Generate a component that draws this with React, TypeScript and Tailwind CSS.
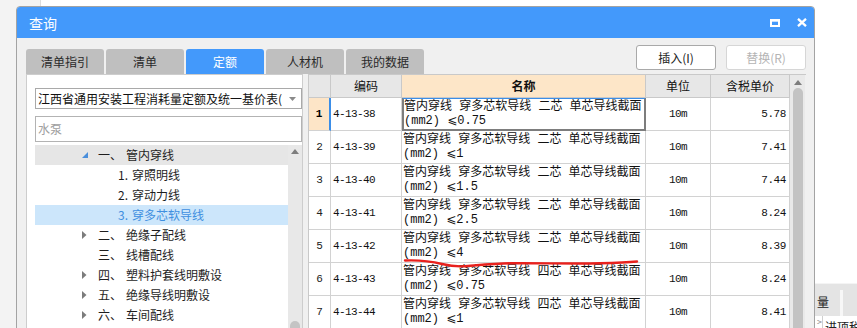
import React from "react"

const ui = "font-['Noto_Sans_CJK_SC',sans-serif]"
const mono = "font-['Liberation_Mono','Noto_Sans_CJK_SC','DejaVu_Sans',monospace]"

const tabs = ["清单指引", "清单", "定额", "人材机", "我的数据"]

type TreeItem = {
  level: 0 | 1
  arrow?: "open" | "closed"
  num: string
  text: string
  band?: boolean
  selected?: boolean
}

const tree: TreeItem[] = [
  { level: 0, arrow: "open", num: "一、", text: "管内穿线", band: true },
  { level: 1, num: "1.", text: "穿照明线" },
  { level: 1, num: "2.", text: "穿动力线" },
  { level: 1, num: "3.", text: "穿多芯软导线", selected: true },
  { level: 0, arrow: "closed", num: "二、", text: "绝缘子配线" },
  { level: 0, num: "三、", text: "线槽配线" },
  { level: 0, arrow: "closed", num: "四、", text: "塑料护套线明敷设" },
  { level: 0, arrow: "closed", num: "五、", text: "绝缘导线明敷设" },
  { level: 0, arrow: "closed", num: "六、", text: "车间配线" },
]

const rows = [
  { n: 1, code: "4-13-38", core: "二芯", sec: "0.75", price: "5.78" },
  { n: 2, code: "4-13-39", core: "二芯", sec: "1", price: "7.41" },
  { n: 3, code: "4-13-40", core: "二芯", sec: "1.5", price: "7.44" },
  { n: 4, code: "4-13-41", core: "二芯", sec: "2.5", price: "8.24" },
  { n: 5, code: "4-13-42", core: "二芯", sec: "4", price: "8.39" },
  { n: 6, code: "4-13-43", core: "四芯", sec: "0.75", price: "8.24" },
  { n: 7, code: "4-13-44", core: "四芯", sec: "1", price: "8.41" },
]

function TreeRow({ item }: { item: TreeItem }) {
  const bg = item.selected ? "bg-[#cce6fb]" : item.band ? "bg-[#e6e6e6]" : ""
  const color = item.selected ? "text-[#3f8fe0]" : "text-[#1e1e1e]"
  return (
    <div className={`flex items-center h-[20px] text-[12px] whitespace-nowrap ${bg} ${color}`}>
      {item.level === 0 ? (
        <>
          <span className="w-[47px]" />
          <span className="w-[16px] flex items-center">
            {item.arrow === "open" && (
              <svg width="6" height="6" viewBox="0 0 6 6">
                <polygon points="6,0 6,6 0,6" fill="#4a8fdc" />
              </svg>
            )}
            {item.arrow === "closed" && (
              <svg width="5" height="8" viewBox="0 0 5 8">
                <polygon points="0,0 4.5,4 0,8" fill="#7c7c7c" />
              </svg>
            )}
          </span>
          <span className="w-[28px]">{item.num}</span>
          <span>{item.text}</span>
        </>
      ) : (
        <>
          <span className="w-[83px]" />
          <span className="w-[14px]">{item.num}</span>
          <span>{item.text}</span>
        </>
      )}
    </div>
  )
}

function TableRow({ r }: { r: (typeof rows)[number] }) {
  const first = r.n === 1
  return (
    <div className="grid grid-cols-[22px_71px_244px_65px_79px] h-[33px]">
      <div
        className={`flex items-center justify-center border-r border-b border-[#d2d2d2] text-[11px] ${mono} ${
          first ? "bg-[#fde5c7] font-bold border-r-2 border-r-[#3b8ee8]" : "bg-white text-[#222]"
        }`}
      >
        {r.n}
      </div>
      <div className={`flex items-center pl-[2px] border-r border-b border-[#d2d2d2] bg-white text-[11px] tracking-[-0.6px] text-[#111] ${mono}`}>
        {r.code}
      </div>
      <div
        className={`bg-white text-[12px] leading-[14px] text-[#111] whitespace-nowrap overflow-hidden ${mono} ${
          first
            ? "border-2 border-[#7d7d7d] border-t-[#3b8ee8] border-t pl-0 pt-[1px]"
            : "border-r border-b border-[#d2d2d2] pl-[1px] pt-[2px]"
        }`}
      >
        <div>管内穿线 穿多芯软导线 {r.core} 单芯导线截面</div>
        <div>(mm2) ⩽{r.sec}</div>
      </div>
      <div className={`flex items-center justify-center pt-[1px] border-r border-b border-[#d2d2d2] bg-white text-[11px] tracking-[-0.6px] text-[#111] ${mono}`}>
        10m
      </div>
      <div className={`flex items-center justify-end pr-[3px] pt-[1px] border-r border-b border-[#d2d2d2] bg-white text-[11px] tracking-[-0.4px] text-[#111] ${mono}`}>
        {r.price}
      </div>
    </div>
  )
}

export default function App() {
  return (
    <div className={`relative w-[857px] h-[328px] overflow-hidden bg-white flex ${ui}`}>
      {/* underlying app */}
      <div className="w-[41px] h-full bg-[#f3f3f3] border-r border-[#dedede]" />
      <div className="flex-1 flex flex-col items-end">
        <div className="mt-[283px] w-[42px] h-[35px] bg-[#e4e4e4] border-t border-[#f4f4f4] flex">
          <div className="w-[25px] flex items-end pb-[5px] pl-[2px] text-[12px] text-[#222]">量</div>
          <div className="w-[3px] bg-[#f7f7f7] mt-[6px]" />
        </div>
        <div className="w-[42px] flex h-[12px] text-[12px] text-[#222] leading-[16px]">
          <div className="w-[10px] pl-[2px] text-[#888] text-[9px] leading-[12px]">&gt;</div>
          <div className="border-l border-[#cfcfcf] pl-[2px] pt-[3px] whitespace-nowrap">进项税</div>
        </div>
      </div>

      {/* dialog */}
      <div className="absolute left-[16px] top-[6px] w-[799px] h-[345px] border border-[#a3a3a3] rounded-t-[4px] overflow-hidden bg-[#f0f0f0] flex flex-col">
        <div className="h-[31px] bg-[#4399fb] flex items-center pl-[12px] pr-[7px] text-white">
          <span className="text-[14px] leading-none">查询</span>
          <div className="ml-auto flex items-center gap-[17px]">
            <svg width="10" height="8" viewBox="0 0 10 8">
              <rect x="1" y="1.2" width="8" height="5.8" fill="none" stroke="white" strokeWidth="2" />
              <rect x="0" y="0" width="10" height="2.6" fill="white" />
            </svg>
            <svg width="10" height="9" viewBox="0 0 10 9">
              <path d="M1 0.8 L9 8.2 M9 0.8 L1 8.2" stroke="white" strokeWidth="2.3" />
            </svg>
          </div>
        </div>

        <div className="flex-1 flex flex-col pl-[9px] pr-[8px]">
          <div className="h-[36px] flex justify-between">
            <div className="mt-[11px] flex gap-[2px]">
              {tabs.map((t) => (
                <div
                  key={t}
                  className={`w-[78px] h-[25px] rounded-t-[3px] flex items-center justify-center text-[12px] ${
                    t === "定额" ? "bg-[#4399fb] text-white" : "bg-[#bfbfbf] text-[#2a2a2a]"
                  }`}
                >
                  {t}
                </div>
              ))}
            </div>
            <div className="mt-[7px] flex gap-[10px]">
              <div className="w-[80px] h-[25px] bg-white border border-[#a9a9a9] rounded-[3px] flex items-center justify-center text-[12px] text-[#222]">
                插入(I)
              </div>
              <div className="w-[80px] h-[25px] bg-white border border-[#d6d6d6] rounded-[3px] flex items-center justify-center text-[12px] text-[#b4b4b4]">
                替换(R)
              </div>
            </div>
          </div>

          <div className="flex-1 flex gap-[5px]">
            {/* left panel */}
            <div className="w-[277px] bg-white border-l border-t border-r border-[#cdcdcd] flex flex-col pl-[8px] pt-[13px]">
              <div className="h-[21px] border border-[#a9a9a9] flex items-center pl-[2px] pr-[5px] text-[12px] text-[#111]">
                <span className="flex-1 overflow-hidden whitespace-nowrap">江西省通用安装工程消耗量定额及统一基价表(</span>
                <svg width="7" height="4" viewBox="0 0 7 4" className="ml-[3px]">
                  <polygon points="0,0 7,0 3.5,4" fill="#8a8a8a" />
                </svg>
              </div>
              <div className="mt-[7px] h-[26px] border border-[#b3b3b3] flex items-center pl-[2px] text-[12px] text-[#a0a0a0]">
                水泵
              </div>
              <div className="mt-[3px] flex flex-1">
                <div className="flex-1 flex flex-col">
                  {tree.map((it) => (
                    <TreeRow key={it.num + it.text} item={it} />
                  ))}
                </div>
                <div className="w-[14px] bg-[#e8e8e8] flex flex-col items-center">
                  <svg width="8" height="5" viewBox="0 0 8 5" className="mt-[4px]">
                    <polygon points="0,5 8,5 4,0" fill="#7d7d7d" />
                  </svg>
                  <div className="mt-[167px] w-[10px] h-[20px] rounded-full bg-[#c4c4c4]" />
                </div>
              </div>
            </div>

            {/* table */}
            <div className="flex-1 flex border-t border-l border-[#c9c9c9]">
              <div className="w-[481px] flex flex-col">
                <div className="grid grid-cols-[22px_71px_244px_65px_79px] h-[23px] text-[12px] text-[#111]">
                  <div className="bg-[#e7e7e7] border-r border-b border-[#c9c9c9]" />
                  <div className="bg-[#e7e7e7] border-r border-b border-[#c9c9c9] flex items-center justify-center">编码</div>
                  <div className="bg-[#fde6c8] border-r border-b border-[#c9c9c9] flex items-center justify-center font-bold">名称</div>
                  <div className="bg-[#e7e7e7] border-r border-b border-[#c9c9c9] flex items-center justify-center">单位</div>
                  <div className="bg-[#e7e7e7] border-r border-b border-[#c9c9c9] flex items-center justify-center">含税单价</div>
                </div>
                {rows.map((r) => (
                  <TableRow key={r.n} r={r} />
                ))}
              </div>
              <div className="w-[15px] bg-[#e9e9e9] flex flex-col items-center">
                <svg width="8" height="5" viewBox="0 0 8 5" className="mt-[5px]">
                  <polygon points="0,5 8,5 4,0" fill="#7d7d7d" />
                </svg>
                <div className="mt-[3px] w-[10px] flex-1 rounded-t-full bg-[#c3c3c3]" />
              </div>
            </div>
          </div>
        </div>
      </div>

      {/* red annotation */}
      <svg className="absolute left-0 top-0 pointer-events-none" width="857" height="328" viewBox="0 0 857 328">
        <path
          d="M405 260.5 C418 260 430 261 442 264 C450 266 458 267 468 266 C480 265 495 263.5 510 263.3 C540 263 575 264 600 263.3 C615 263 628 262.5 637 261.5"
          fill="none"
          stroke="#e8211d"
          strokeWidth="2.4"
          strokeLinecap="round"
        />
      </svg>
    </div>
  )
}
